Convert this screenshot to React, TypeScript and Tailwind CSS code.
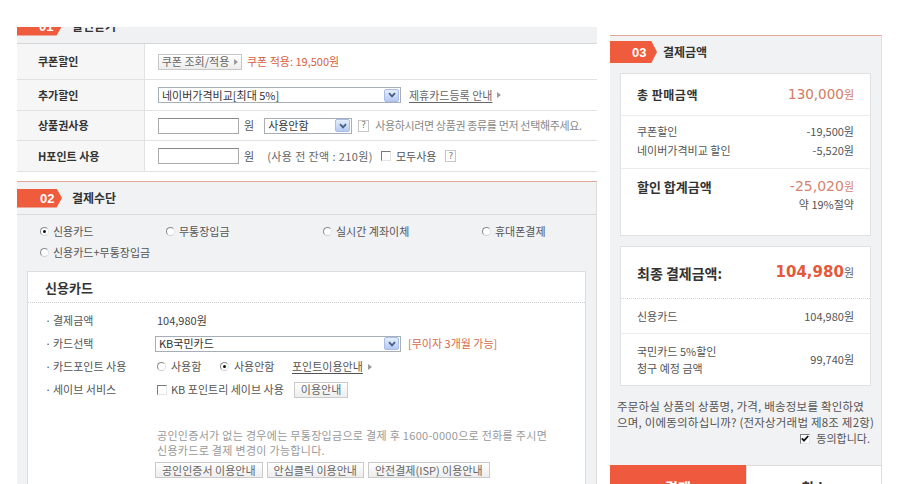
import React from "react";

const Tri = () => (
  <svg width="4" height="6" viewBox="0 0 4 6" className="ml-[5px] inline-block">
    <path d="M0 0 L4 3 L0 6 Z" fill="#9a9a9a" />
  </svg>
);

const SelArrow = () => (
  <span className="w-[15px] h-[13px] mr-px flex items-center justify-center rounded-[2px] border border-[#a9bde6] bg-linear-to-b from-[#e6eefd] to-[#b5c9f1]">
    <svg width="8" height="6" viewBox="0 0 8 6">
      <path d="M1 1.2 L4 4.4 L7 1.2" stroke="#4a5f86" strokeWidth="1.8" fill="none" />
    </svg>
  </span>
);

const Radio = ({ checked = false }: { checked?: boolean }) => (
  <span className="w-[9px] h-[9px] rounded-full border border-[#8a8a8a] border-r-[#e2e2e2] border-b-[#d0d0d0] bg-white flex items-center justify-center shrink-0">
    {checked && <span className="w-[3px] h-[3px] rounded-full bg-[#111]" />}
  </span>
);

const Check = ({ checked = false }: { checked?: boolean }) => (
  <span className="w-[10px] h-[10px] border border-[#7a7a7a] border-r-[#e4e4e4] border-b-[#e4e4e4] bg-white flex items-center justify-center shrink-0">
    {checked && (
      <svg width="8" height="7" viewBox="0 0 8 7">
        <path d="M0.8 3.4 L3 5.6 L7.2 1" stroke="#111" strokeWidth="1.8" fill="none" />
      </svg>
    )}
  </span>
);

const Help = () => (
  <span className="w-[11px] h-[12px] border border-[#c6c6c6] bg-white text-[9px] text-[#777] flex items-center justify-center font-['DejaVu_Sans',sans-serif]">
    ?
  </span>
);

const Btn = ({ children }: { children: React.ReactNode }) => (
  <span className="h-[16px] px-[6px] border border-[#cacaca] bg-linear-to-b from-white to-[#ededed] text-[11px] text-[#666] flex items-center whitespace-nowrap">
    {children}
  </span>
);

const Badge = ({ n, cls }: { n: string; cls: string }) => (
  <span
    className={
      "bg-[#ee5b3d] text-white font-bold text-[13px] flex items-center font-['Liberation_Sans',sans-serif] [clip-path:polygon(0_0,88%_0,100%_50%,88%_100%,0_100%)] " +
      cls
    }
  >
    {n}
  </span>
);

const Row = ({
  label,
  h,
  children,
}: {
  label: string;
  h: string;
  children: React.ReactNode;
}) => (
  <div className={"flex border-b border-[#e2e2e2] " + h}>
    <div className="w-[128px] bg-[#f6f6f6] border-r border-[#e2e2e2] pl-[21px] flex items-center font-bold text-[11px] text-[#333]">
      {label}
    </div>
    <div className="flex-1 pl-[13px] flex items-center">{children}</div>
  </div>
);

const Input = () => <span className="w-[81px] h-[16px] border border-[#aaa] border-t-[#888] bg-white" />;

export default function App() {
  return (
    <div className="w-[900px] h-[484px] overflow-hidden bg-white font-['Noto_Sans_CJK_KR',sans-serif] text-[11px] leading-none text-[#555]">
      <div className="flex pl-[17px]">
        {/* LEFT COLUMN */}
        <div className="w-[580px] flex flex-col pt-[27px]">
          <div className="h-[16px] overflow-hidden bg-[#f0f1f3]">
            <div className="-mt-[18px] h-[34px] flex items-center">
              <Badge n="01" cls="h-[19px] w-[45px] pl-[22px]" />
              <span className="ml-[10px] text-[12px] font-bold text-[#333]">할인받기</span>
            </div>
          </div>
          <div className="border-t border-[#d6d6d6]">
            <Row label="쿠폰할인" h="h-[36px]">
              <span className="h-[16px] w-[84px] border border-[#c6c6c6] bg-linear-to-b from-white to-[#ececec] text-[11px] text-[#666] flex items-center justify-center">
                쿠폰 조회/적용
                <Tri />
              </span>
              <span className="ml-[5px] text-[#d65f3f]">쿠폰 적용: 19,500원</span>
            </Row>
            <Row label="추가할인" h="h-[31px]">
              <span className="w-[243px] h-[16px] border border-[#a7aeb8] bg-white flex items-center justify-between pl-[3px] text-[#333]">
                네이버가격비교[최대 5%]
                <SelArrow />
              </span>
              <span className="ml-[8px] text-[#666] underline underline-offset-2 flex items-center">
                제휴카드등록 안내
                <Tri />
              </span>
            </Row>
            <Row label="상품권사용" h="h-[30px]">
              <Input />
              <span className="ml-[5px] text-[#555]">원</span>
              <span className="ml-[10px] w-[88px] h-[16px] border border-[#a7aeb8] bg-white flex items-center justify-between pl-[3px] text-[#333]">
                사용안함
                <SelArrow />
              </span>
              <span className="ml-[6px]">
                <Help />
              </span>
              <span className="ml-[6px] text-[#888] tracking-[-0.35px]">사용하시려면 상품권 종류를 먼저 선택해주세요.</span>
            </Row>
            <Row label="H포인트 사용" h="h-[31px]">
              <Input />
              <span className="ml-[5px] text-[#555]">원</span>
              <span className="ml-[13px] text-[#666] tracking-[0.4px]">(사용 전 잔액 : 210원)</span>
              <span className="ml-[8px]">
                <Check />
              </span>
              <span className="ml-[5px] text-[#555]">모두사용</span>
              <span className="ml-[9px]">
                <Help />
              </span>
            </Row>
          </div>

          {/* SECTION 02 */}
          <div className="mt-[9px] border-t border-[#e4a797] border-r border-r-[#dedede] bg-[#f1f2f4]">
            <div className="h-[33px] flex items-center border-b border-[#dadada]">
              <Badge n="02" cls="h-[19px] w-[45px] pl-[23px]" />
              <span className="ml-[10px] text-[12px] font-bold text-[#333]">결제수단</span>
            </div>
            <div className="pl-[23px] pt-[6px] pb-[8px] text-[#555]">
              <div className="flex h-[21px] items-center">
                <span className="w-[126px] flex items-center gap-[4px]">
                  <Radio checked />
                  신용카드
                </span>
                <span className="w-[157px] flex items-center gap-[4px]">
                  <Radio />
                  무통장입금
                </span>
                <span className="w-[159px] flex items-center gap-[4px]">
                  <Radio />
                  실시간 계좌이체
                </span>
                <span className="flex items-center gap-[4px]">
                  <Radio />
                  휴대폰결제
                </span>
              </div>
              <div className="flex h-[21px] items-center">
                <span className="flex items-center gap-[4px]">
                  <Radio />
                  신용카드+무통장입금
                </span>
              </div>
            </div>
            <div className="mx-[10px] bg-white border border-[#dddddd] pb-[40px]">
              <div className="h-[31px] flex items-center pl-[17px] text-[13px] font-bold text-[#333] border-b border-dotted border-[#cfcfcf]">
                신용카드
              </div>
              <div className="pt-[6px]">
                <div className="h-[23px] flex items-center">
                  <span className="w-[129px] pl-[17px] flex items-center">
                    <span className="w-[8px]">·</span>결제금액
                  </span>
                  <span className="text-[#444]">104,980원</span>
                </div>
                <div className="h-[23px] flex items-center">
                  <span className="w-[127px] pl-[17px] flex items-center">
                    <span className="w-[8px]">·</span>카드선택
                  </span>
                  <span className="w-[246px] h-[16px] border border-[#a7aeb8] bg-white flex items-center justify-between pl-[3px] text-[#333]">
                    KB국민카드
                    <SelArrow />
                  </span>
                  <span className="ml-[7px] text-[#d6684a]">[무이자 3개월 가능]</span>
                </div>
                <div className="h-[23px] flex items-center">
                  <span className="w-[129px] pl-[17px] flex items-center">
                    <span className="w-[8px]">·</span>카드포인트 사용
                  </span>
                  <span className="w-[63px] flex items-center gap-[5px]">
                    <Radio />
                    사용함
                  </span>
                  <span className="w-[72px] flex items-center gap-[5px]">
                    <Radio checked />
                    사용안함
                  </span>
                  <span className="text-[#555] underline underline-offset-2 flex items-center">
                    포인트이용안내
                    <Tri />
                  </span>
                </div>
                <div className="h-[23px] flex items-center">
                  <span className="w-[129px] pl-[17px] flex items-center">
                    <span className="w-[8px]">·</span>세이브 서비스
                  </span>
                  <Check />
                  <span className="ml-[4px]">KB 포인트리 세이브 사용</span>
                  <span className="ml-[10px]">
                    <Btn>이용안내</Btn>
                  </span>
                </div>
              </div>
              <div className="ml-[129px] mt-[27px] leading-[15px] text-[#999] tracking-[0.3px] whitespace-nowrap">
                공인인증서가 없는 경우에는 무통장입금으로 결제 후 1600-0000으로 전화를 주시면
                <br />
                신용카드로 결제 변경이 가능합니다.
              </div>
              <div className="ml-[127px] mt-[4px] flex gap-[4px]">
                <Btn>공인인증서 이용안내</Btn>
                <Btn>안심클릭 이용안내</Btn>
                <Btn>안전결제(ISP) 이용안내</Btn>
              </div>
            </div>
          </div>
        </div>

        {/* RIGHT COLUMN */}
        <div className="ml-[13px] w-[272px] mt-[35px] flex flex-col">
          <div className="bg-[#f1f2f4] border-t border-[#e4a797] border-r border-r-[#e2e2e2] pb-[18px]">
            <div className="h-[37px] pt-[5px] flex items-start">
              <Badge n="03" cls="h-[22px] w-[47px] pl-[22px]" />
              <span className="ml-[6px] h-[22px] flex items-center text-[12px] font-bold text-[#333]">결제금액</span>
            </div>

            <div className="mx-[10px] bg-white border border-[#e1e1e1]">
              <div className="h-[42px] px-[16px] flex items-center justify-between border-b border-[#ececec]">
                <span className="text-[12px] font-bold text-[#333] tracking-[0.5px]">총 판매금액</span>
                <span className="flex items-baseline text-[#d27a62]">
                  <span className="text-[13.5px] font-['DejaVu_Sans',sans-serif]">130,000</span>
                  <span className="text-[11px]">원</span>
                </span>
              </div>
              <div className="px-[16px] pt-[6px] pb-[8px] leading-[19px] border-b border-[#ececec]">
                <div className="flex justify-between">
                  <span>쿠폰할인</span>
                  <span>-19,500원</span>
                </div>
                <div className="flex justify-between">
                  <span>네이버가격비교 할인</span>
                  <span>-5,520원</span>
                </div>
              </div>
              <div className="h-[66px] px-[16px] pt-[7px]">
                <div className="flex justify-between items-center h-[20px]">
                  <span className="text-[13px] font-bold text-[#333]">할인 합계금액</span>
                  <span className="flex items-baseline text-[#d8836d]">
                    <span className="text-[14px] font-['DejaVu_Sans',sans-serif]">-25,020</span>
                    <span className="text-[11px]">원</span>
                  </span>
                </div>
                <div className="flex justify-end h-[16px] items-center">약 19%절약</div>
              </div>
            </div>

            <div className="mx-[10px] mt-[10px] bg-white border border-[#e1e1e1]">
              <div className="h-[52px] px-[16px] flex items-center justify-between border-b border-dotted border-[#d4d4d4]">
                <span className="text-[14px] font-bold text-[#333]">최종 결제금액:</span>
                <span className="flex items-baseline">
                  <span className="text-[15px] font-bold text-[#e35a3b] font-['DejaVu_Sans',sans-serif]">104,980</span>
                  <span className="text-[11px] text-[#666]">원</span>
                </span>
              </div>
              <div className="h-[35px] px-[16px] flex items-center justify-between border-b border-[#ececec]">
                <span>신용카드</span>
                <span>104,980원</span>
              </div>
              <div className="h-[51px] px-[16px] flex items-center justify-between">
                <span className="leading-[17px]">
                  국민카드 5%할인
                  <br />
                  청구 예정 금액
                </span>
                <span>99,740원</span>
              </div>
            </div>

            <div className="mt-[12px] pl-[7px] leading-[16px] whitespace-nowrap text-[11.5px] tracking-[0.2px] text-[#555]">
              주문하실 상품의 상품명, 가격, 배송정보를 확인하였
              <br />
              으며, 이에동의하십니까? (전자상거래법 제8조 제2항)
            </div>
            <div className="h-[17px] flex items-center justify-end pr-[11px] gap-[6px]">
              <Check checked />
              <span>동의합니다.</span>
            </div>
          </div>
          <div className="flex h-[44px]">
            <span className="w-[136px] bg-[#ef5a3f] text-white font-bold text-[14px] flex items-center justify-center">결제</span>
            <span className="flex-1 bg-white border border-[#dcdcdc] text-[#333] font-bold text-[14px] flex items-center justify-center">취소</span>
          </div>
        </div>
      </div>
    </div>
  );
}
